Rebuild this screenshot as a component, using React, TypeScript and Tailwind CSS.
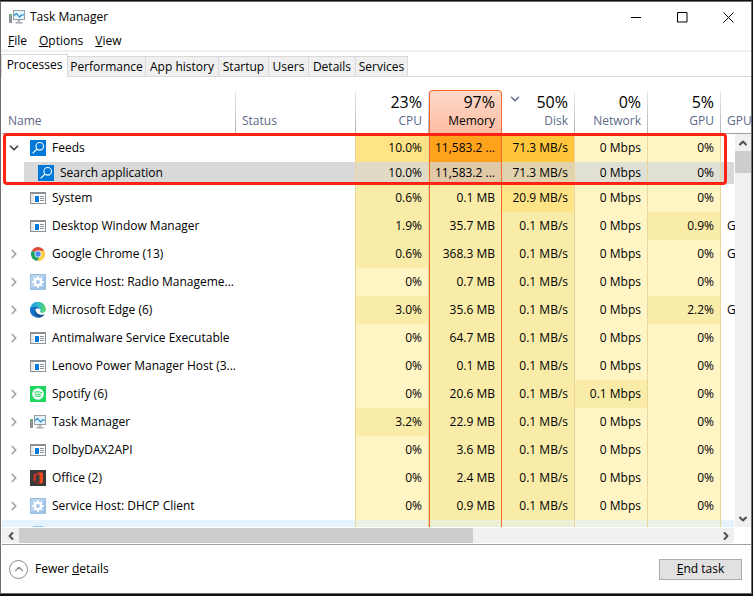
import type { ReactNode } from "react";
import { ChevronDown, ChevronRight, ChevronUp, ChevronLeft } from "lucide-react";

type IconName = "search" | "window" | "chrome" | "gear" | "edge" | "spotify" | "taskmgr" | "office";

// [text, heat level 0-4]
type Cell = [string, number];

type Process = {
  name: string;
  icon: IconName;
  expand?: "open" | "closed";
  selected?: boolean;
  cells: Cell[];
  engine?: string;
};

const TABS = [
  { label: "Performance", width: "w-[78px]" },
  { label: "App history", width: "w-[73px]" },
  { label: "Startup", width: "w-[50px]" },
  { label: "Users", width: "w-10" },
  { label: "Details", width: "w-[47px]" },
  { label: "Services", width: "w-[52px]" },
];

const COLUMNS = [
  { label: "CPU", total: "23%" },
  { label: "Memory", total: "97%" },
  { label: "Disk", total: "50%" },
  { label: "Network", total: "0%" },
  { label: "GPU", total: "5%" },
];

const HEAT = ["bg-[#fff4c4]", "bg-[#f9eca8]", "bg-[#ffe487]", "bg-[#ffc63d]", "bg-[#ffa31d]"];
const SELECTED = ["bg-[#e1e0d5]", "bg-[#e0d8b8]", "bg-[#e0dbc6]", "bg-[#e1d3ae]", "bg-[#e1c9a8]"];

const PROCESSES: Process[] = [
  {
    name: "Feeds",
    icon: "search",
    expand: "open",
    cells: [["10.0%", 2], ["11,583.2 ...", 4], ["71.3 MB/s", 3], ["0 Mbps", 0], ["0%", 0]],
  },
  {
    name: "Search application",
    icon: "search",
    selected: true,
    cells: [["10.0%", 2], ["11,583.2 ...", 4], ["71.3 MB/s", 3], ["0 Mbps", 0], ["0%", 0]],
  },
  {
    name: "System",
    icon: "window",
    cells: [["0.6%", 1], ["0.1 MB", 1], ["20.9 MB/s", 2], ["0 Mbps", 0], ["0%", 0]],
  },
  {
    name: "Desktop Window Manager",
    icon: "window",
    cells: [["1.9%", 1], ["35.7 MB", 1], ["0.1 MB/s", 1], ["0 Mbps", 0], ["0.9%", 1]],
    engine: "G",
  },
  {
    name: "Google Chrome (13)",
    icon: "chrome",
    expand: "closed",
    cells: [["0.6%", 1], ["368.3 MB", 1], ["0.1 MB/s", 1], ["0 Mbps", 0], ["0%", 0]],
    engine: "G",
  },
  {
    name: "Service Host: Radio Manageme...",
    icon: "gear",
    expand: "closed",
    cells: [["0%", 0], ["0.7 MB", 1], ["0.1 MB/s", 1], ["0 Mbps", 0], ["0%", 0]],
  },
  {
    name: "Microsoft Edge (6)",
    icon: "edge",
    expand: "closed",
    cells: [["3.0%", 1], ["35.6 MB", 1], ["0.1 MB/s", 1], ["0 Mbps", 0], ["2.2%", 1]],
    engine: "G",
  },
  {
    name: "Antimalware Service Executable",
    icon: "window",
    expand: "closed",
    cells: [["0%", 0], ["64.7 MB", 1], ["0.1 MB/s", 1], ["0 Mbps", 0], ["0%", 0]],
  },
  {
    name: "Lenovo Power Manager Host (3...",
    icon: "window",
    cells: [["0%", 0], ["0.1 MB", 1], ["0.1 MB/s", 1], ["0 Mbps", 0], ["0%", 0]],
  },
  {
    name: "Spotify (6)",
    icon: "spotify",
    expand: "closed",
    cells: [["0%", 0], ["20.6 MB", 1], ["0.1 MB/s", 1], ["0.1 Mbps", 1], ["0%", 0]],
  },
  {
    name: "Task Manager",
    icon: "taskmgr",
    expand: "closed",
    cells: [["3.2%", 1], ["22.9 MB", 1], ["0.1 MB/s", 1], ["0 Mbps", 0], ["0%", 0]],
  },
  {
    name: "DolbyDAX2API",
    icon: "window",
    expand: "closed",
    cells: [["0%", 0], ["3.6 MB", 1], ["0.1 MB/s", 1], ["0 Mbps", 0], ["0%", 0]],
  },
  {
    name: "Office (2)",
    icon: "office",
    expand: "closed",
    cells: [["0%", 0], ["2.4 MB", 1], ["0.1 MB/s", 1], ["0 Mbps", 0], ["0%", 0]],
  },
  {
    name: "Service Host: DHCP Client",
    icon: "gear",
    expand: "closed",
    cells: [["0%", 0], ["0.9 MB", 1], ["0.1 MB/s", 1], ["0 Mbps", 0], ["0%", 0]],
  },
];

const ICONS: Record<IconName, ReactNode> = {
  search: (
    <>
      <rect width="16" height="16" fill="#0078d7" />
      <circle cx="9.7" cy="6.3" r="3.8" fill="none" stroke="#fff" strokeWidth="1.1" />
      <path d="M7 9 2.6 13.4" stroke="#fff" strokeWidth="1.2" />
    </>
  ),
  window: (
    <>
      <rect x="0.5" y="2.5" width="15" height="11" fill="#fff" stroke="#8a9094" />
      <path d="M0 3h16" stroke="#8a9094" strokeWidth="2" />
      <path d="M1 4h3v9H1z" fill="#e8e8e8" />
      <path d="M5 6h4v6H5z" fill="#0078d7" />
      <path d="M10 6.5h4M10 8.5h4M10 10.5h4" stroke="#8a9094" />
    </>
  ),
  chrome: (
    <>
      <circle cx="8" cy="8" r="7" fill="#fff" />
      <path d="M8 8 1.94 4.5A7 7 0 0 1 14.06 4.5z" fill="#dd4b3e" />
      <path d="M8 8 1.94 4.5A7 7 0 0 0 7.2 15L10.8 9.6z" fill="#1da462" />
      <path d="M8 4.7h6.2A7 7 0 0 1 7.2 15L10.8 9.6z" fill="#ffcd46" />
      <circle cx="8" cy="8" r="3.4" fill="#fff" />
      <circle cx="8" cy="8" r="2.7" fill="#4a8af4" />
    </>
  ),
  gear: (
    <>
      <rect width="16" height="16" fill="#9fc6ea" />
      <path d="M0 16V0h16z" fill="#b9d5ee" />
      <rect x="0.5" y="0.5" width="15" height="15" fill="none" stroke="#9bbedd" />
      <path
        d="M8 2.300v11.400M2.300 8h11.400M4 4l8 8M12 4l-8 8"
        stroke="#fff"
        strokeWidth="2"
      />
      <circle cx="8" cy="8" r="4.200" fill="#fff" />
      <circle cx="8" cy="8" r="1.900" fill="#9fc6ea" />
    </>
  ),
  edge: (
    <>
      <defs>
        <linearGradient id="edge-top" x1="0" y1="0.5" x2="1" y2="0.5">
          <stop offset="0" stopColor="#1e9de0" />
          <stop offset="0.55" stopColor="#2fc0c8" />
          <stop offset="1" stopColor="#62d957" />
        </linearGradient>
      </defs>
      <path d="M0 8a8 8 0 0 1 16-.7c0 2.4-1.7 3.5-3.5 3.5-2.2 0-3-.8-2.3-1.6.6-1 .3-3.2-2.6-3.2C4 6 1 8 0 8z" fill="url(#edge-top)" />
      <path d="M0 8.3C.2 5.7 2.5 4.6 5 4.6c2.4 0 4.6 1.2 5 3.2-.6-1-1.8-1.6-3-1.4-2 .5-2.3 2.8-1.4 4.8 1 2.4 3.2 4 5.6 3.9A8 8 0 0 1 0 8.3z" fill="#1370c4" />
      <path d="M5.4 7.8c-1.3 3 .6 6.9 4.4 7.6 2.2-.3 4-1.500 5-3.2-3.300 1.600-8.600.7-9.400-4.400z" fill="#114a8b" />
    </>
  ),
  spotify: (
    <>
      <rect width="16" height="16" fill="#1ed760" />
      <circle cx="8" cy="8" r="5.800" fill="#fff" />
      <path d="M4.600 6.200c2.400-.7 4.900-.5 7 .6M5 8.300c2-.5 4-.3 5.900.6M5.400 10.200c1.600-.4 3.200-.2 4.700.6" fill="none" stroke="#1ed760" strokeWidth="1.100" strokeLinecap="round" />
    </>
  ),
  taskmgr: (
    <>
      <path d="M.5 5.500h2v8h-2z" fill="#9a9d9f" stroke="#85898c" />
      <path d="M.8 6.500h1.600" stroke="#3fd13f" strokeWidth="1.500" />
      <rect x="4.500" y="1.500" width="11" height="9" fill="#e4f4fc" stroke="#9aa0a5" />
      <path d="M5 6.500 7.500 4.500l3 3.500 2-2H15" fill="none" stroke="#1583c7" strokeWidth="1.100" />
      <path d="M8.500 11h3v1.500h-3zM6.500 13h7v1.500h-7z" fill="#a4a8ab" />
    </>
  ),
  office: (
    <>
      <rect width="16" height="16" fill="#3a3a3a" />
      <path d="M3.500 4.500 9.500 2v2.500L6 5.500v5l-2.500 1.300z" fill="#c8322b" />
      <path d="M9.500 2 13 3v10l-3.500 1z" fill="#eb4a1e" />
      <path d="M3.500 11.800 9.500 12.300V14z" fill="#a5201f" />
    </>
  ),
};

function AppIcon({ name }: { name: IconName }) {
  return (
    <svg viewBox="0 0 16 16" className="size-4 shrink-0" aria-hidden="true">
      {ICONS[name]}
    </svg>
  );
}

function Divider() {
  return <span className="w-px bg-linear-to-b from-[#e6e6e6] to-[#b4b4b4]" />;
}

// Separator on the right of a value column; memory is the sorted one
function columnBorder(i: number) {
  return i === 1 ? "border-x border-[#f96a2e]" : "border-r border-[#ead59c]";
}

function ProcessRow({ process }: { process: Process }) {
  const { selected } = process;
  const colors = selected ? SELECTED : HEAT;
  const fill = selected ? "bg-[#d9d9d9]" : "";

  return (
    <tr className={selected ? "h-[22px]" : "h-7"}>
      <td className={selected ? "p-0 pl-[22px]" : "p-0 pl-1"}>
        {selected ? (
          <div className="flex h-[22px] items-center gap-1.5 bg-[#d9d9d9] pl-3.5">
            <AppIcon name={process.icon} />
            <span className="whitespace-nowrap">{process.name}</span>
          </div>
        ) : (
          <div className="flex items-center">
            <div className="mr-2 flex w-4 justify-center">
              {process.expand && (
                <button type="button" aria-label={process.expand === "open" ? "Collapse" : "Expand"}>
                  {process.expand === "open" ? (
                    <ChevronDown className="size-3.5 text-[#444]" strokeWidth={3} />
                  ) : (
                    <ChevronRight className="size-3.5 text-[#a0a0a0]" strokeWidth={3} />
                  )}
                </button>
              )}
            </div>
            <AppIcon name={process.icon} />
            <span className="ml-1.5 whitespace-nowrap">{process.name}</span>
          </div>
        )}
      </td>
      <td className={`border-r border-[#ead59c] p-0 ${fill}`} />
      {process.cells.map(([text, heat], i) => (
        <td key={i} className={`p-0 pr-1.5 text-right whitespace-nowrap ${columnBorder(i)} ${colors[heat]}`}>
          {text}
        </td>
      ))}
      <td className={`p-0 pl-1.5 ${fill}`}>{process.engine}</td>
    </tr>
  );
}

export default function App() {
  return (
    <div className="flex min-h-screen flex-col overflow-hidden border-t border-r border-b-2 border-[#101010] bg-white font-['Open_Sans','Noto_Sans',sans-serif] text-xs text-black">
      <div className="flex grow flex-col border border-[#6e6e6e]">
        {/* Title bar */}
        <header className="flex h-[30px] items-center pl-2">
          <AppIcon name="taskmgr" />
          <h1 className="ml-[5px] grow">Task Manager</h1>
          <button type="button" aria-label="Minimize" className="flex h-full w-[46px] items-center justify-center">
            <svg viewBox="0 0 11 11" className="size-[11px]" stroke="#000">
              <path d="M0 5.500h10" />
            </svg>
          </button>
          <button type="button" aria-label="Maximize" className="flex h-full w-[46px] items-center justify-center">
            <svg viewBox="0 0 11 11" className="size-[11px]" stroke="#000" fill="none">
              <path d="M.5.5h9.500v9.500H.5z" />
            </svg>
          </button>
          <button type="button" aria-label="Close" className="flex h-full w-[46px] items-center justify-center">
            <svg viewBox="0 0 11 11" className="size-[11px]" stroke="#000">
              <path d="m.5.5 10 10M10.500.5l-10 10" />
            </svg>
          </button>
        </header>

        {/* Menu */}
        <nav className="flex h-5 items-center gap-3 border-b-2 border-[#f0f0f0] pl-[7px]">
          <button type="button"><u>F</u>ile</button>
          <button type="button"><u>O</u>ptions</button>
          <button type="button"><u>V</u>iew</button>
        </nav>

        {/* Tabs */}
        <div role="tablist" className="flex h-[25px] items-end shadow-[inset_0_-1px_0_#d9d9d9]">
          <button type="button" role="tab" aria-selected="true" className="h-[23px] w-[67px] border border-b-0 border-[#d9d9d9] bg-white pb-0.5">
            Processes
          </button>
          {TABS.map(({ label, width }) => (
            <button
              key={label}
              type="button"
              role="tab"
              aria-selected="false"
              className={`h-[21px] border border-l-0 border-[#d9d9d9] bg-[#f0f0f0] whitespace-nowrap ${width}`}
            >
              {label}
            </button>
          ))}
        </div>

        {/* Process list */}
        <div className="relative flex gap-px pl-px">
          <div className="min-w-0 grow">
            <table className="w-full table-fixed border-separate border-spacing-0">
              <colgroup>
                <col className="w-[234px]" />
                <col className="w-[120px]" />
                {COLUMNS.map((column) => (
                  <col key={column.label} className="w-[73px]" />
                ))}
                <col />
              </colgroup>
              <thead className="text-[#5b6a87]">
                <tr className="h-[57px]">
                  {["Name", "Status"].map((label) => (
                    <th key={label} scope="col" className="border-b border-[#a0a0a0] p-0 pt-[15px] font-normal">
                      <div className="flex h-[41px] items-end justify-between">
                        <span className="pb-1 pl-1.5">{label}</span>
                        <span className="flex h-full"><Divider /></span>
                      </div>
                    </th>
                  ))}
                  {COLUMNS.map(({ label, total }, i) => (
                    <th key={label} scope="col" className="border-b border-[#a0a0a0] p-0 align-bottom font-normal">
                      <div
                        className={
                          i === 1
                            ? "flex h-[43px] rounded-t-sm border border-b-0 border-[#f96a2e] bg-linear-to-b from-[#fddacb] to-[#febca3] text-black"
                            : "flex h-[41px]"
                        }
                      >
                        {label === "Disk" && <ChevronDown className="ml-1.5 size-3.5 shrink-0" strokeWidth={2.5} />}
                        <div className="flex grow flex-col items-end justify-end pr-1.5 pb-1">
                          <span className="text-base leading-[22px] text-black">{total}</span>
                          <span className="leading-4">{label}</span>
                        </div>
                        {i !== 1 && <Divider />}
                      </div>
                    </th>
                  ))}
                  <th scope="col" className="border-b border-[#a0a0a0] p-0 pb-1 pl-1.5 text-left align-bottom font-normal">
                    GPU
                  </th>
                </tr>
              </thead>
              <tbody>
                {PROCESSES.map((process) => (
                  <ProcessRow key={process.name} process={process} />
                ))}
                {/* Top edge of the hovered row under the fold */}
                <tr className="h-[7px] bg-[#e5f3ff]">
                  <td className="p-0 pl-[31px] align-bottom">
                    <div className="h-px w-2.5 bg-[#8cc4f5]" />
                  </td>
                  <td className="border-r border-[#ead59c] p-0" />
                  {COLUMNS.map(({ label }, i) => (
                    <td key={label} className={`p-0 ${columnBorder(i)} ${i === 1 || i === 2 ? "bg-[#ebefd6]" : "bg-[#edf3e4]"}`} />
                  ))}
                  <td className="p-0" />
                </tr>
              </tbody>
            </table>
          </div>

          <div className="flex w-4 shrink-0 flex-col">
            <div className="-ml-px h-[57px] border-b border-[#a0a0a0]" />
            <div className="flex grow flex-col items-center bg-[#f0f0f0]">
              <button type="button" aria-label="Scroll up" className="flex h-[17px] items-center">
                <ChevronUp className="size-3 text-[#505050]" strokeWidth={4} />
              </button>
              <div className="h-[22px] w-full bg-[#cdcdcd]" />
              <div className="grow" />
              <button type="button" aria-label="Scroll down" className="flex h-[17px] items-center">
                <ChevronDown className="size-3 text-[#505050]" strokeWidth={4} />
              </button>
            </div>
          </div>

          {/* Callout round the Feeds group */}
          <div className="pointer-events-none absolute top-14 right-6 left-0.5 h-[52px] rounded border-3 border-[#ff2314]" />
        </div>

        {/* Horizontal scrollbar */}
        <div className="mt-px mr-[17px] mb-px ml-px flex h-[15px] bg-[#f0f0f0]">
          <button type="button" aria-label="Scroll left" className="flex w-[17px] items-center justify-center">
            <ChevronLeft className="size-3 text-[#505050]" strokeWidth={4} />
          </button>
          <div className="grow">
            <div className="h-full w-[65%] bg-[#cdcdcd]" />
          </div>
          <button type="button" aria-label="Scroll right" className="flex w-[17px] items-center justify-center">
            <ChevronRight className="size-3 text-[#505050]" strokeWidth={4} />
          </button>
        </div>

        {/* Footer */}
        <footer className="ml-px flex grow items-center justify-between border-t border-[#a0a0a0] pr-[9px] pl-[7px]">
          <button type="button" className="flex items-center gap-[7px]">
            <span className="flex size-[19px] items-center justify-center rounded-full border border-[#8a8a8a]">
              <ChevronUp className="size-3.5 text-[#8a8a8a]" />
            </span>
            <span>Fewer <u>d</u>etails</span>
          </button>
          <button type="button" className="h-[21px] w-[83px] border border-[#adadad] bg-[#e1e1e1]">
            <u>E</u>nd task
          </button>
        </footer>
      </div>
    </div>
  );
}
